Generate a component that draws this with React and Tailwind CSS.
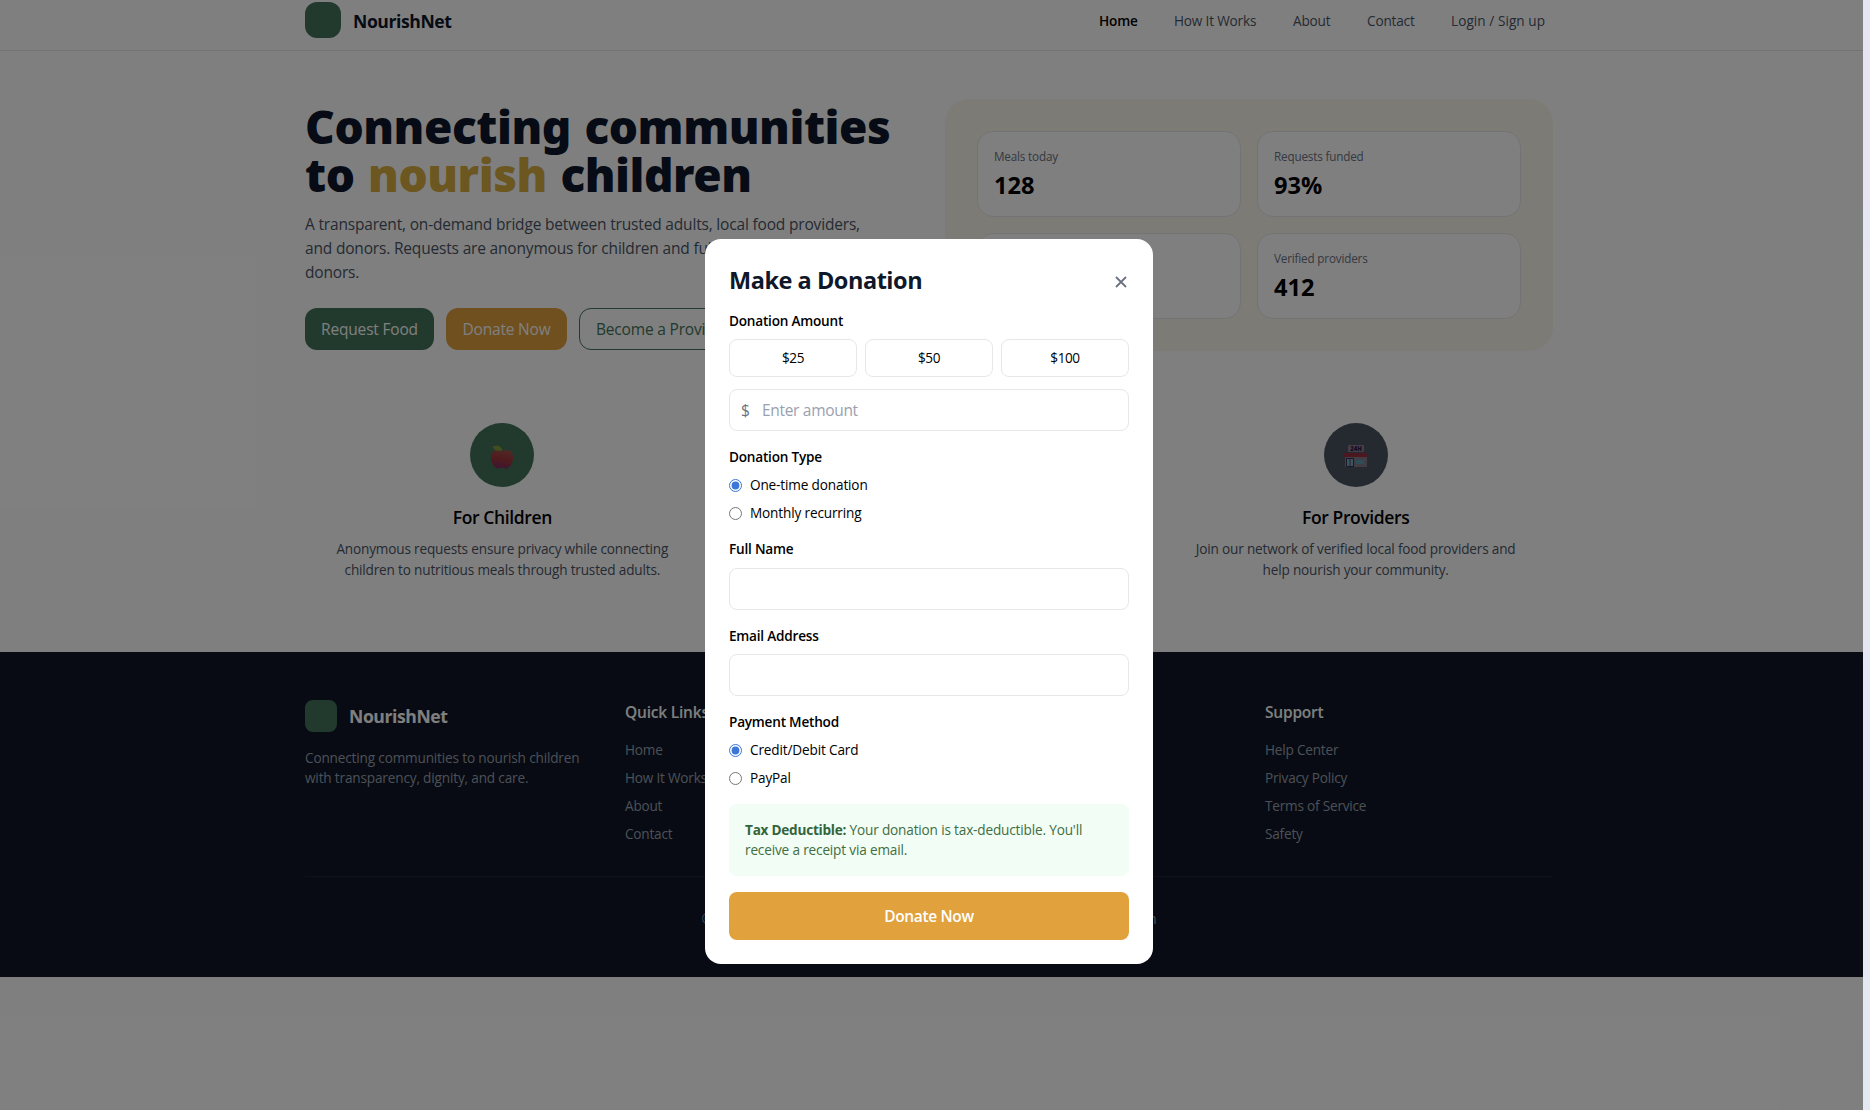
import React from "react";

const navLinks = [
  { label: "How It Works", cls: "w-[83px]" },
  { label: "About", cls: "w-[38px]" },
  { label: "Contact", cls: "w-[48px]" },
  { label: "Login / Sign up", cls: "w-[94px] tracking-[0.004em]" },
];

const stats = [
  { label: "Meals today", value: "128" },
  { label: "Requests funded", value: "93%" },
  { label: "Active donors", value: "1,204" },
  { label: "Verified providers", value: "412" },
];

const footerColumns = [
  { title: "Quick Links", links: ["Home", "How It Works", "About", "Contact"] },
  { title: "Get Involved", links: ["Request Food", "Donate", "Become a Provider", "Volunteer"] },
  { title: "Support", links: ["Help Center", "Privacy Policy", "Terms of Service", "Safety"] },
];

function AppleIcon() {
  return (
    <svg className="mt-1" width="24" height="26" viewBox="0 0 26 28">
      <defs>
        <linearGradient id="apple" x1="0.6" y1="0" x2="0.4" y2="1">
          <stop offset="0" stopColor="#a0524d" />
          <stop offset="0.5" stopColor="#a0363c" />
          <stop offset="1" stopColor="#7c2c60" />
        </linearGradient>
      </defs>
      <path d="M13 7.6c2-1.2 4.800-1.600 7-1 3.400 1 5 4 5 7.600 0 5-2.400 9.400-5.400 11.600-1.800 1.200-3.400.8-4.600.2-1.200-.6-2.800-.6-4 0-1.200.6-2.800 1-4.600-.2C3.400 23.600 1 19.200 1 14.200c0-3.600 1.600-6.600 5-7.600 2.200-.6 5-.2 7 1z" fill="url(#apple)" />
      <path d="M13 7.200c.2-3-2.400-5.400-5.600-5.400-1.600 0-3.200.2-4.600.6.600 2.600 2.600 4.600 5.400 4.800z" fill="#859c3c" />
    </svg>
  );
}

function HandsIcon() {
  return (
    <svg width="26" height="26" viewBox="0 0 24 24" fill="#e8b93c">
      <path d="M12 20.500C5 15.500 2 12 2 8.500A5 5 0 0 1 12 6a5 5 0 0 1 10 2.500c0 3.500-3 7-10 12z" />
    </svg>
  );
}

function StoreIcon() {
  return (
    <svg className="mt-px" width="24" height="22" viewBox="0 0 24 22">
      <rect x="4" y="0" width="16" height="7" rx="1" fill="#8d7a90" />
      <text x="12" y="5.800" textAnchor="middle" fontFamily="Open Sans, sans-serif" fontWeight="800" fontSize="6" fill="#2f1b40">24H</text>
      <rect x="1" y="11" width="22" height="11" fill="#85798b" />
      <rect x="0" y="8" width="24" height="4" fill="#963044" />
      <rect x="2" y="13" width="8" height="9" fill="#3d3150" />
      <rect x="3" y="14" width="2.600" height="7" fill="#74aabd" />
      <rect x="6.400" y="14" width="2.600" height="7" fill="#74aabd" />
      <rect x="12" y="15" width="8" height="4" fill="#5a9cae" />
    </svg>
  );
}

const features = [
  {
    title: "For Children",
    circle: "bg-[#42745a]",
    icon: <AppleIcon />,
    lines: ["Anonymous requests ensure privacy while connecting", "children to nutritious meals through trusted adults."],
  },
  {
    title: "For Donors",
    circle: "bg-[#e1a13d]",
    icon: <HandsIcon />,
    lines: ["See exactly where your contribution goes and", "follow the impact of each meal."],
  },
  {
    title: "For Providers",
    circle: "bg-[#4b5563]",
    icon: <StoreIcon />,
    lines: ["Join our network of verified local food providers and", "help nourish your community."],
  },
];

function Header() {
  return (
    <header className="-mt-[10px] border-b border-gray-200 bg-white pr-[5px]">
      <div className="mx-auto flex max-w-[1280px] items-center justify-between px-4 py-3">
        <div className="flex items-center gap-3">
          <div className="size-9 rounded-xl bg-[#42745a]" />
          <span className="pt-px text-[17.600px] leading-7 font-bold tracking-[-0.024em] text-[#0f172a]">NourishNet</span>
        </div>
        <nav className="flex items-center gap-9 pt-px pr-2 text-[13.600px] leading-5 tracking-[-0.013em] whitespace-nowrap text-gray-600">
          <a className="w-[39px] font-semibold text-black">Home</a>
          {navLinks.map((l) => (
            <a key={l.label} className={l.cls}>{l.label}</a>
          ))}
        </nav>
      </div>
    </header>
  );
}

function Hero() {
  return (
    <section className="mx-auto grid max-w-[1280px] grid-cols-2 items-center gap-8 px-4 py-12">
      <div>
        <h1 className="-mb-[2px] pt-[2px] font-['Noto_Sans'] text-[46px] leading-[48px] font-black tracking-[-0.010em] whitespace-nowrap text-[#0f172a] [word-spacing:2px]">
          Connecting communities
          <br />
          to <span className="text-[#d6ae3e]">nourish</span> children
        </h1>
        <p className="mt-4 text-[15.500px] leading-6 tracking-[-0.0115em] whitespace-nowrap text-gray-600">
          A transparent, on-demand bridge between trusted adults, local food providers,
          <br />
          and donors. Requests are anonymous for children and fully transparent for
          <br />
          donors.
        </p>
        <div className="mt-6 flex gap-3 text-[15.500px] leading-6 tracking-[-0.012em] whitespace-nowrap">
          <button className="h-[42px] w-[129px] rounded-xl bg-[#42745a] text-white">Request Food</button>
          <button className="h-[42px] w-[121px] rounded-xl bg-[#e1a13d] text-white">Donate Now</button>
          <button className="h-[42px] rounded-xl border border-[#42745a] px-4 text-[#42745a]">Become a Provider</button>
        </div>
      </div>
      <div className="grid grid-cols-2 gap-4 rounded-3xl bg-[#faf6ec] p-8">
        {stats.map((s) => (
          <div key={s.label} className="rounded-2xl border border-gray-200 bg-white p-4">
            <div className="text-[11.700px] leading-4 tracking-[-0.015em] text-gray-500">{s.label}</div>
            <div className="mt-[5px] -mb-px text-[23.600px] leading-8 font-bold text-black">{s.value}</div>
          </div>
        ))}
      </div>
    </section>
  );
}

function Features() {
  return (
    <section className="mx-auto grid max-w-[1280px] grid-cols-3 gap-8 px-4 pb-12">
      {features.map((f) => (
        <div key={f.title} className="flex flex-col items-center p-6 text-center">
          <div className={`flex size-16 items-center justify-center rounded-full ${f.circle}`}>{f.icon}</div>
          <h3 className="mt-[17px] text-[17.500px] leading-[27px] font-semibold tracking-[-0.022em] text-black">{f.title}</h3>
          <p className="mt-[7px] text-[13.600px] leading-[21px] tracking-[-0.013em] whitespace-nowrap text-gray-600">
            {f.lines[0]}
            <br />
            {f.lines[1]}
          </p>
        </div>
      ))}
    </section>
  );
}

function Footer() {
  return (
    <footer className="bg-[#101726] pr-[5px]">
      <div className="mx-auto max-w-[1280px] px-4 py-12">
        <div className="grid grid-cols-4 gap-8">
          <div>
            <div className="flex items-center gap-3">
              <div className="size-8 rounded-lg bg-[#42745a]" />
              <span className="text-[17.600px] leading-7 font-bold tracking-[-0.024em] text-white">NourishNet</span>
            </div>
            <p className="mt-4 text-[13.600px] leading-5 tracking-[-0.012em] whitespace-nowrap text-gray-400">
              Connecting communities to nourish children
              <br />
              with transparency, dignity, and care.
            </p>
          </div>
          {footerColumns.map((c) => (
            <div key={c.title}>
              <h4 className="text-[15.500px] leading-6 font-semibold tracking-[-0.013em] text-white">{c.title}</h4>
              <ul className="mt-4 space-y-2 text-[13.600px] leading-5 tracking-[-0.015em] text-gray-400">
                {c.links.map((l) => (
                  <li key={l}>{l}</li>
                ))}
              </ul>
            </div>
          ))}
        </div>
        <div className="mt-8 border-t border-gray-800 pt-8 text-center text-[13.600px] leading-5 tracking-[-0.0185em] text-gray-400">
          © 2024 NourishNet. All rights reserved. Made with care for hungry children
        </div>
      </div>
    </footer>
  );
}

function Radio({ checked, children }) {
  return (
    <label className="flex items-center gap-2 text-[13.600px] leading-5 tracking-[-0.011em] text-black">
      <input type="radio" checked={checked} readOnly className="m-0 size-[13px] accent-[#3b76d8]" />
      {children}
    </label>
  );
}

function Label({ children }) {
  return <div className="text-[13.600px] leading-5 font-semibold tracking-[-0.016em] text-black">{children}</div>;
}

function Modal() {
  return (
    <div className="h-[725px] w-[448px] rounded-2xl bg-white p-6">
      <div className="flex items-center justify-between">
        <h2 className="-mb-px pt-px text-[23.500px] leading-8 font-bold tracking-[-0.02em] text-[#0f172a]">Make a Donation</h2>
        <svg className="mt-[6px] mr-[2.500px]" width="12" height="12" viewBox="0 0 12 12" stroke="#6b7280" strokeWidth="1.800" fill="none">
          <path d="M1 1L11 11M11 1L1 11" />
        </svg>
      </div>

      <div className="mt-4">
        <Label>Donation Amount</Label>
        <div className="mt-2 grid grid-cols-3 gap-2">
          {["$25", "$50", "$100"].map((a) => (
            <button key={a} className="h-[38px] rounded-lg border border-gray-200 text-[13.600px] leading-5 tracking-[-0.03em] text-black">
              {a}
            </button>
          ))}
        </div>
        <div className="mt-3 flex h-[42px] items-center rounded-lg border border-gray-200 pl-[11px] text-[15.500px] leading-6 tracking-[-0.02em]">
          <span className="w-[21px] pb-px text-gray-500">$</span>
          <span className="text-gray-400">Enter amount</span>
        </div>
      </div>

      <div className="mt-4">
        <Label>Donation Type</Label>
        <div className="mt-2 space-y-2">
          <Radio checked>One-time donation</Radio>
          <Radio checked={false}>Monthly recurring</Radio>
        </div>
      </div>

      <div className="mt-4">
        <Label>Full Name</Label>
        <div className="mt-[9px] h-[42px] rounded-lg border border-gray-200" />
      </div>

      <div className="mt-4">
        <Label>Email Address</Label>
        <div className="mt-2 h-[42px] rounded-lg border border-gray-200" />
      </div>

      <div className="mt-4">
        <Label>Payment Method</Label>
        <div className="mt-2 space-y-2">
          <Radio checked>Credit/Debit Card</Radio>
          <Radio checked={false}>PayPal</Radio>
        </div>
      </div>

      <div className="mt-4 rounded-lg bg-[#f2fdf5] p-4 text-[13.600px] leading-5 tracking-[-0.012em] whitespace-nowrap text-[#3f6e42]">
        <strong className="font-bold tracking-[-0.018em] text-[#34643a]">Tax Deductible:</strong> Your donation is tax-deductible. You'll
        <br />
        receive a receipt via email.
      </div>

      <button className="mt-4 h-12 w-full rounded-lg bg-[#e1a13d] text-[15.500px] leading-6 font-semibold tracking-[-0.022em] text-white">
        Donate Now
      </button>
    </div>
  );
}

export default function App() {
  return (
    <div className="flex h-[1110px] w-[1870px] overflow-hidden bg-linear-to-b from-[#e7e4f4] to-[#e3e9f2] font-['Open_Sans',sans-serif]">
      <div className="relative h-full w-[1863px] overflow-hidden bg-white">
        <Header />
        <main className="pr-[5px]">
          <Hero />
          <Features />
        </main>
        <Footer />
        <div className="absolute inset-0 flex items-start justify-center bg-black/50 pt-[239px] pr-[5px]">
          <Modal />
        </div>
      </div>
    </div>
  );
}
